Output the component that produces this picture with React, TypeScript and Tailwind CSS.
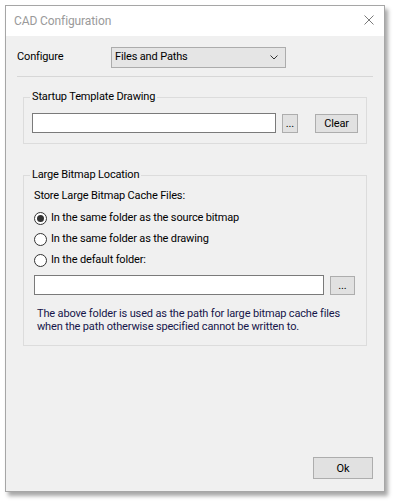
const font = "font-['Roboto',sans-serif] text-[11px] tracking-[-0.15px]";

function Button({ label, className }: { label: string; className: string }) {
  return (
    <button
      className={`flex items-center justify-center border border-[#adadad] bg-[#e1e1e1] text-black leading-none ${className}`}
    >
      {label}
    </button>
  );
}

function Radio({ label, checked }: { label: string; checked?: boolean }) {
  return (
    <label className="flex h-[21px] items-center gap-[4px]">
      <span className="flex h-[13px] w-[13px] items-center justify-center rounded-full border border-[#333333] bg-white">
        {checked && <span className="h-[7px] w-[7px] rounded-full bg-[#333333]" />}
      </span>
      <span>{label}</span>
    </label>
  );
}

export default function App() {
  return (
    <div className={`h-[504px] w-[396px] bg-white pl-[5px] pt-[5px] ${font}`}>
      <div className="flex h-[487px] w-[380px] flex-col border border-[#a6a6a6] shadow-[3px_4px_4px_rgba(0,0,0,0.35)]">
        {/* title bar */}
        <div className="flex h-[30px] items-center justify-between bg-white pl-[8px] pr-[10px]">
          <span className="text-[12px] tracking-[-0.1px] text-[#9a9a9a]">CAD Configuration</span>
          <svg width="10" height="10" viewBox="0 0 10 10" className="mt-[-2px]">
            <path d="M0.5 0.5 L9.5 9.5 M9.5 0.5 L0.5 9.5" stroke="#7a7a7a" strokeWidth="1" fill="none" />
          </svg>
        </div>

        <div className="flex flex-1 flex-col bg-[#f0f0f0] text-black">
          {/* configure row */}
          <div className="mt-[11px] flex h-[21px] items-center">
            <span className="ml-[11px] w-[94px]">Configure</span>
            <div className="flex h-[21px] w-[175px] items-center justify-between border border-[#acacac] bg-[#e5e5e5] pl-[3px] pr-[7px]">
              <span>Files and Paths</span>
              <svg width="8" height="5" viewBox="0 0 8 5">
                <path d="M0.5 0.5 L4 4 L7.5 0.5" stroke="#333" strokeWidth="1" fill="none" />
              </svg>
            </div>
          </div>

          <div className="mx-[11px] mt-[8px] h-px bg-[#d7d7d7]" />

          {/* startup template */}
          <fieldset className="mx-[17px] mt-[12px] border border-[#dcdcdc] px-[8px] pb-[10px] pt-[8px]">
            <legend className="-ml-[2px] px-[2px] leading-[16px]">Startup Template Drawing</legend>
            <div className="flex h-[20px] items-center">
              <input className="h-[20px] w-[244px] border border-[#7a7a7a] bg-white outline-none" />
              <Button label="..." className="ml-[6px] h-[19px] w-[16px] text-[#333]" />
              <Button label="Clear" className="ml-[17px] h-[19px] w-[43px]" />
            </div>
          </fieldset>

          {/* large bitmap */}
          <fieldset className="mx-[17px] mt-[23px] border border-[#dcdcdc] px-[10px] pb-[12px] pt-[5px]">
            <legend className="-ml-[4px] px-[2px] leading-[16px]">Large Bitmap Location</legend>
            <div className="leading-[16px]">Store Large Bitmap Cache Files:</div>
            <div className="mt-[4px] flex flex-col">
              <Radio label="In the same folder as the source bitmap" checked />
              <Radio label="In the same folder as the drawing" />
              <Radio label="In the default folder:" />
            </div>
            <div className="mt-[4px] flex h-[20px] items-center">
              <input className="h-[20px] w-[290px] border border-[#7a7a7a] bg-white outline-none" />
              <Button label="..." className="ml-[6px] h-[19px] w-[25px] text-[#333]" />
            </div>
            <p className="mt-[12px] pl-[3px] leading-[13px] text-[#16164a]">
              The above folder is used as the path for large bitmap cache files
              <br />
              when the path otherwise specified cannot be written to.
            </p>
          </fieldset>

          <div className="flex-1" />

          <div className="mb-[12px] mr-[11px] flex justify-end">
            <Button label="Ok" className="h-[22px] w-[60px]" />
          </div>
        </div>
      </div>
    </div>
  );
}
